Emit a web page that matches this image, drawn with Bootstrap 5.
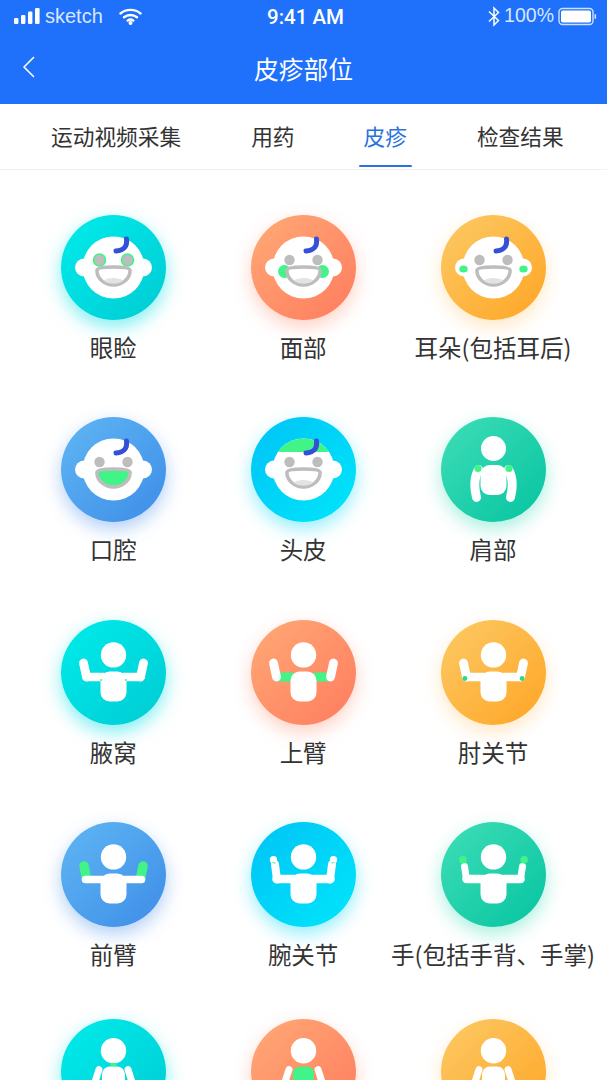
<!DOCTYPE html>
<html lang="zh">
<head>
    <meta charset="UTF-8">
    <meta name="viewport" content="width=device-width, initial-scale=1">
    <title>皮疹部位</title>
    <link href="https://cdn.jsdelivr.net/npm/bootstrap@5.3.0/dist/css/bootstrap.min.css" rel="stylesheet">
    <style>
        body { font-family: "Noto Sans CJK SC", "Noto Sans", sans-serif; color: #333; background: #fff; }
        .screen { width: 607px; height: 1080px; overflow: hidden; }
        .topbar { background: #1f70fb; height: 104px; color: #fff; }
        .statusline { height: 32px; padding: 0 10px 0 14px; font-family: "Liberation Sans", sans-serif; font-size: 19.5px; }
        .status-side { width: 200px; }
        .status-sketch { color: #d8e6ff; }
        .status-word { font-size: 20px; }
        .clock { font-family: Roboto, "Liberation Sans", sans-serif; font-size: 20.5px; font-weight: 500; padding-top: 2px; }
        .titleline { height: 72px; padding-top: 2px; }
        .page-title { font-size: 24.8px; font-weight: 400; margin: 0; }
        .back-btn { left: 22px; top: 24px; }
        .tabbar { height: 66px; border-bottom: 1px solid #f1f1f1; }
        .tab-item { font-size: 21.7px; line-height: 1; color: #333; height: 65px; text-decoration: none; padding-top: 21px; }
        .tab-item.on { color: #2a72dc; }
        .tab-item.on::after { content: ""; position: absolute; left: -5px; right: -5px; bottom: 2px; height: 2.5px; background: #2a72dc; border-radius: 2px; }
        .tab-1 { margin-left: 51px; }
        .tab-2 { margin-left: 70px; }
        .tab-3 { margin-left: 69px; }
        .tab-4 { margin-left: 70px; }
        .parts { padding: 45px 19px 0 18.3px; }
        .part-row { height: 202.3px; }
        .part-row.last-row { margin-top: -5px; }
        .bubble { width: 105px; height: 105px; }
        .bubble svg { display: block; }
        .part-name { font-size: 23.5px; line-height: 1; margin-top: 16px; white-space: nowrap; }
        .tone-teal { background: linear-gradient(135deg, #00eceb, #00cbd3); box-shadow: 0 7px 18px rgba(0, 226, 232, .5); }
        .tone-coral { background: linear-gradient(135deg, #ffaa76, #ff7b5e); box-shadow: 0 7px 18px rgba(255, 135, 100, .38); }
        .tone-amber { background: linear-gradient(135deg, #fcca66, #ffa524); box-shadow: 0 7px 18px rgba(255, 190, 90, .35); }
        .tone-blue { background: linear-gradient(135deg, #60b6f3, #3d8de8); box-shadow: 0 7px 18px rgba(70, 140, 235, .42); }
        .tone-sky { background: linear-gradient(135deg, #00c3f6, #00e6fa); box-shadow: 0 7px 18px rgba(0, 215, 248, .42); }
        .tone-mint { background: linear-gradient(135deg, #3fdeb6, #05c4a1); box-shadow: 0 7px 18px rgba(30, 215, 170, .38); }
    </style>
</head>
<body>
<svg width="0" height="0" class="position-absolute">
    <defs>
        <g id="face">
            <circle cx="-29.5" cy="0" r="9" fill="#fff"/>
            <circle cx="29.5" cy="0" r="9" fill="#fff"/>
            <circle cx="0" cy="0" r="31" fill="#fff"/>
        </g>
        <g id="faceline">
            <path d="M13 -28.5C14 -20.5 10 -17.5 2.5 -16.5" fill="none" stroke="#3450d8" stroke-width="5" stroke-linecap="round"/>
        </g>
        <g id="eyes">
            <circle cx="-14" cy="-7.5" r="5.2" fill="#bdbdbd"/>
            <circle cx="14" cy="-7.5" r="5.2" fill="#bdbdbd"/>
        </g>
        <path id="mouth" d="M-16.6 3C-16.6 0 -8 -.5 0 -.5S16.6 0 16.6 3C16.6 11 9 17.5 0 17.5S-16.6 11 -16.6 3Z"/>
        <g id="smile">
            <use href="#mouth" fill="#fff" stroke="#bdbdbd" stroke-width="3.5"/>
            <path d="M-10 13C-5 9.5 5 9.5 10 13C7 15.5 3.5 16 0 16S-7 15.5 -10 13Z" fill="#e3e3e3"/>
        </g>
        <g id="man-head"><circle cx="0" cy="-17.6" r="12.7" fill="#fff"/></g>
        <g id="man-body"><rect x="-13" y="-1" width="26" height="30" rx="9" fill="#fff"/></g>
        <g id="man-upper" fill="none" stroke="#fff" stroke-width="8.6" stroke-linecap="round">
            <path d="M-27 4.5H-10M27 4.5H10"/>
        </g>
        <g id="man-fore" fill="none" stroke="#fff" stroke-width="8.8" stroke-linecap="round">
            <path d="M-30 -9.5L-27 4.5M30 -9.5L27 4.5"/>
        </g>
        <g id="hang-man">
            <circle cx="0" cy="-21" r="12.5" fill="#fff"/>
            <rect x="-13" y="-4.5" width="26" height="30" rx="9" fill="#fff"/>
            <path d="M-15 0C-19.5 8 -19.5 18 -17 28M15 0C19.5 8 19.5 18 17 28" fill="none" stroke="#fff" stroke-width="9" stroke-linecap="round"/>
        </g>
        <g id="low-man">
            <circle cx="0" cy="-20.8" r="12.7" fill="#fff"/>
            <path d="M-14.5 -2L-19 12M14.5 -2L19 12" fill="none" stroke="#fff" stroke-width="7" stroke-linecap="round"/>
        </g>
    </defs>
</svg>

<div class="screen">
    <header class="topbar position-relative">
        <div class="statusline d-flex align-items-center justify-content-between">
            <div class="status-side d-flex align-items-center">
                <svg width="27" height="18" viewBox="0 0 27 18" fill="#fff">
                    <rect x="0" y="11" width="4.4" height="6" rx="1.2"/><rect x="7" y="8" width="4.4" height="9" rx="1.2"/>
                    <rect x="14" y="4.5" width="4.4" height="12.5" rx="1.2"/><rect x="21" y="1" width="4.6" height="16" rx="1.2"/>
                </svg>
                <span class="status-sketch status-word ms-1">sketch</span>
                <svg class="ms-3" width="23" height="17" viewBox="0 0 23 17" fill="none" stroke="#fff" stroke-width="2.4" stroke-linecap="round">
                    <path d="M1.5 5.5C7 .7 16 .7 21.5 5.5"/><path d="M5 9.2C8.7 6.2 14.3 6.2 18 9.2"/><path d="M8.6 12.6C10.4 11.2 12.6 11.2 14.4 12.6"/>
                    <circle cx="11.5" cy="15" r=".8" fill="#fff"/>
                </svg>
            </div>
            <span class="clock">9:41 AM</span>
            <div class="status-side d-flex align-items-center justify-content-end">
                <svg width="12" height="21" viewBox="0 0 12 21" fill="none" stroke="#fff" stroke-width="1.5">
                    <path d="M1 5.5L10.5 14.5L6 19V2L10.5 6.5L1 15.5"/>
                </svg>
                <span class="status-sketch ms-1">100%</span>
                <svg class="ms-1" width="39" height="19" viewBox="0 0 39 19">
                    <rect x="1" y="1.5" width="34" height="16" rx="3.5" fill="none" stroke="#cfe0ff" stroke-width="1.4"/>
                    <rect x="3" y="3.5" width="30" height="12" rx="1.8" fill="#fff"/>
                    <rect x="36.5" y="7" width="1.6" height="5" rx=".8" fill="#cfe0ff"/>
                </svg>
            </div>
        </div>
        <div class="titleline d-flex align-items-center justify-content-center position-relative">
            <a class="back-btn position-absolute lh-1" href="#" aria-label="返回">
                <svg class="d-block" width="14" height="22" viewBox="0 0 14 22" fill="none" stroke="#fff" stroke-width="1.6" stroke-linecap="round" stroke-linejoin="round">
                    <path d="M11.5 1.5L2 11L11.5 20.5"/>
                </svg>
            </a>
            <h1 class="page-title">皮疹部位</h1>
        </div>
    </header>

    <nav class="tabbar nav flex-nowrap">
        <a class="tab-item tab-1 position-relative" href="#">运动视频采集</a>
        <a class="tab-item tab-2 position-relative" href="#">用药</a>
        <a class="tab-item tab-3 position-relative on" href="#">皮疹</a>
        <a class="tab-item tab-4 position-relative" href="#">检查结果</a>
    </nav>

    <main class="parts">
        <div class="row g-0 part-row">
            <div class="col-4 d-flex flex-column align-items-center">
                <div class="bubble rounded-circle tone-teal">
                    <svg width="105" height="105" viewBox="-52.5 -52.5 105 105">
                        <use href="#face"/>
                        <circle cx="-14" cy="-7.5" r="6.8" fill="#41f488"/><circle cx="14" cy="-7.5" r="6.8" fill="#41f488"/>
                        <use href="#eyes"/><use href="#smile"/><use href="#faceline"/>
                    </svg>
                </div>
                <div class="part-name">眼睑</div>
            </div>
            <div class="col-4 d-flex flex-column align-items-center">
                <div class="bubble rounded-circle tone-coral">
                    <svg width="105" height="105" viewBox="-52.5 -52.5 105 105">
                        <use href="#face"/><use href="#eyes"/>
                        <circle cx="-19" cy="4" r="6.5" fill="#41f488"/><circle cx="19" cy="4" r="6.5" fill="#41f488"/>
                        <use href="#smile"/><use href="#faceline"/>
                    </svg>
                </div>
                <div class="part-name">面部</div>
            </div>
            <div class="col-4 d-flex flex-column align-items-center">
                <div class="bubble rounded-circle tone-amber">
                    <svg width="105" height="105" viewBox="-52.5 -52.5 105 105">
                        <use href="#face"/>
                        <ellipse cx="-30" cy="1.5" rx="4.2" ry="3.6" fill="#41f488"/><ellipse cx="30" cy="1.5" rx="4.2" ry="3.6" fill="#41f488"/>
                        <use href="#eyes"/><use href="#smile"/><use href="#faceline"/>
                    </svg>
                </div>
                <div class="part-name">耳朵(包括耳后)</div>
            </div>
        </div>

        <div class="row g-0 part-row">
            <div class="col-4 d-flex flex-column align-items-center">
                <div class="bubble rounded-circle tone-blue">
                    <svg width="105" height="105" viewBox="-52.5 -52.5 105 105">
                        <use href="#face"/><use href="#eyes"/>
                        <use href="#mouth" fill="#41f488" stroke="#bdbdbd" stroke-width="3.5"/><use href="#faceline"/>
                    </svg>
                </div>
                <div class="part-name">口腔</div>
            </div>
            <div class="col-4 d-flex flex-column align-items-center">
                <div class="bubble rounded-circle tone-sky">
                    <svg width="105" height="105" viewBox="-52.5 -52.5 105 105">
                        <use href="#face"/>
                        <path d="M-25.5 -17.6A31 31 0 0 1 25.5 -17.6Z" fill="#41f488"/>
                        <use href="#eyes"/><use href="#smile"/><use href="#faceline"/>
                    </svg>
                </div>
                <div class="part-name">头皮</div>
            </div>
            <div class="col-4 d-flex flex-column align-items-center">
                <div class="bubble rounded-circle tone-mint">
                    <svg width="105" height="105" viewBox="-52.5 -52.5 105 105">
                        <use href="#hang-man"/>
                        <circle cx="-15.5" cy="-1" r="3.6" fill="#41f488"/><circle cx="15.5" cy="-1" r="3.6" fill="#41f488"/>
                    </svg>
                </div>
                <div class="part-name">肩部</div>
            </div>
        </div>

        <div class="row g-0 part-row">
            <div class="col-4 d-flex flex-column align-items-center">
                <div class="bubble rounded-circle tone-teal">
                    <svg width="105" height="105" viewBox="-52.5 -52.5 105 105">
                        <use href="#man-head"/><use href="#man-upper"/><use href="#man-fore"/><use href="#man-body"/>
                        <circle cx="-12.4" cy="7.4" r="1" fill="#41f488"/><circle cx="12.4" cy="7.4" r="1" fill="#41f488"/>
                    </svg>
                </div>
                <div class="part-name">腋窝</div>
            </div>
            <div class="col-4 d-flex flex-column align-items-center">
                <div class="bubble rounded-circle tone-coral">
                    <svg width="105" height="105" viewBox="-52.5 -52.5 105 105">
                        <use href="#man-head"/>
                        <path d="M-27 4.5H-10M27 4.5H10" fill="none" stroke="#41f488" stroke-width="9"/>
                        <use href="#man-fore"/><use href="#man-body"/>
                    </svg>
                </div>
                <div class="part-name">上臂</div>
            </div>
            <div class="col-4 d-flex flex-column align-items-center">
                <div class="bubble rounded-circle tone-amber">
                    <svg width="105" height="105" viewBox="-52.5 -52.5 105 105">
                        <use href="#man-head"/><use href="#man-upper"/><use href="#man-fore"/><use href="#man-body"/>
                        <circle cx="-28.6" cy="6" r="2.4" fill="#2fd98a"/><circle cx="28.6" cy="6" r="2.4" fill="#2fd98a"/>
                    </svg>
                </div>
                <div class="part-name">肘关节</div>
            </div>
        </div>

        <div class="row g-0 part-row">
            <div class="col-4 d-flex flex-column align-items-center">
                <div class="bubble rounded-circle tone-blue">
                    <svg width="105" height="105" viewBox="-52.5 -52.5 105 105">
                        <use href="#man-head"/>
                        <path d="M-29.5 -8.5L-27 4M29.5 -8.5L27 4" fill="none" stroke="#41f488" stroke-width="9.5" stroke-linecap="round"/>
                        <path d="M-28 5H-10M28 5H10" fill="none" stroke="#fff" stroke-width="7.6" stroke-linecap="round"/>
                        <use href="#man-body"/>
                    </svg>
                </div>
                <div class="part-name">前臂</div>
            </div>
            <div class="col-4 d-flex flex-column align-items-center">
                <div class="bubble rounded-circle tone-sky">
                    <svg width="105" height="105" viewBox="-52.5 -52.5 105 105">
                        <use href="#man-head"/><use href="#man-upper"/>
                        <path d="M-28.5 -10L-26.5 5M28.5 -10L26.5 5" fill="none" stroke="#fff" stroke-width="8" stroke-linecap="round"/>
                        <use href="#man-body"/>
                        <circle cx="-30" cy="-14.7" r="3.7" fill="#fff"/><circle cx="30" cy="-14.7" r="3.7" fill="#fff"/>
                        <path d="M-31 -12L-28 -11.4M31 -12L28 -11.4" stroke="#41f488" stroke-width="1"/>
                    </svg>
                </div>
                <div class="part-name">腕关节</div>
            </div>
            <div class="col-4 d-flex flex-column align-items-center">
                <div class="bubble rounded-circle tone-mint">
                    <svg width="105" height="105" viewBox="-52.5 -52.5 105 105">
                        <use href="#man-head"/><use href="#man-upper"/>
                        <path d="M-29 -8L-27 5M29 -8L27 5" fill="none" stroke="#fff" stroke-width="7" stroke-linecap="round"/>
                        <use href="#man-body"/>
                        <circle cx="-30.6" cy="-14.7" r="3.8" fill="#41f488"/><circle cx="30.6" cy="-14.7" r="3.8" fill="#41f488"/>
                    </svg>
                </div>
                <div class="part-name">手(包括手背、手掌)</div>
            </div>
        </div>

        <div class="row g-0 part-row last-row">
            <div class="col-4 d-flex flex-column align-items-center">
                <div class="bubble rounded-circle tone-teal">
                    <svg width="105" height="105" viewBox="-52.5 -52.5 105 105">
                        <use href="#low-man"/>
                        <rect x="-3" y="-8.6" width="6" height="3" fill="#41f488"/>
                        <rect x="-11.5" y="-5" width="23" height="30" rx="8" fill="#fff"/>
                    </svg>
                </div>
            </div>
            <div class="col-4 d-flex flex-column align-items-center">
                <div class="bubble rounded-circle tone-coral">
                    <svg width="105" height="105" viewBox="-52.5 -52.5 105 105">
                        <use href="#low-man"/>
                        <rect x="-10.5" y="-5" width="21" height="30" rx="7" fill="#41f488"/>
                    </svg>
                </div>
            </div>
            <div class="col-4 d-flex flex-column align-items-center">
                <div class="bubble rounded-circle tone-amber">
                    <svg width="105" height="105" viewBox="-52.5 -52.5 105 105">
                        <use href="#low-man"/>
                        <rect x="-11.5" y="-5" width="23" height="30" rx="8" fill="#fff"/>
                    </svg>
                </div>
            </div>
        </div>
    </main>
</div>
<script src="https://cdn.jsdelivr.net/npm/bootstrap@5.3.0/dist/js/bootstrap.bundle.min.js"></script>
</body>
</html>
